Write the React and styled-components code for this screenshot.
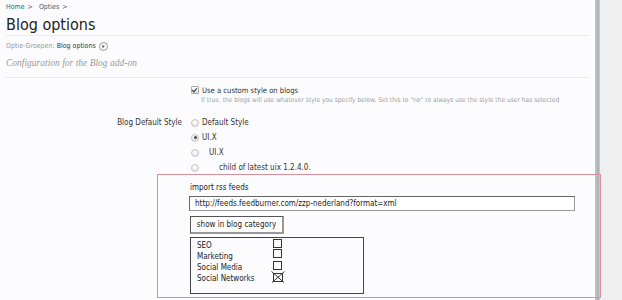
import React from 'react'
import styled, { createGlobalStyle } from 'styled-components'

const GlobalStyle = createGlobalStyle`
  html, body {
    margin: 0;
    padding: 0;
    background: #efefef;
  }
  body {
    font-family: "DejaVu Sans Condensed", "DejaVu Sans", sans-serif;
    color: #333;
  }
`

const Page = styled.div`
  display: flex;
  width: 622px;
  height: 300px;
  overflow: hidden;
`

const Panel = styled.div`
  width: 595px;
  flex-shrink: 0;
  background: #fcfcfe;
  padding: 3px 0 0 6px;
  box-sizing: border-box;
`

const Edge = styled.div`
  width: 5px;
  flex-shrink: 0;
  background: linear-gradient(to right, #c4cad0, #a8b1ba 60%, #c9ced3);
`

const Breadcrumb = styled.div`
  font-size: 7px;
  line-height: 9px;
  color: #3d5e7a;
  word-spacing: 1px;
`

const Crumb = styled.span`
  margin-right: 6px;
`

const Title = styled.h1`
  margin: 2px 0 0;
  font-family: "DejaVu Sans Condensed", "DejaVu Sans", sans-serif;
  font-weight: normal;
  font-size: 16px;
  line-height: 21px;
  color: #222;
`

const Divider = styled.div`
  height: 1px;
  width: 583px;
  background: #e4ecf0;
  margin-top: ${({ top }) => top}px;
`

const GroupLine = styled.div`
  margin-top: 6px;
  display: flex;
  align-items: center;
  gap: 2px;
  font-size: 7px;
  line-height: 9px;
  color: #999;
`

const GroupName = styled.span`
  color: #333;
`

const ToggleIcon = styled.span`
  display: inline-flex;
  align-items: center;
  justify-content: center;
  width: 7px;
  height: 7px;
  border: 1px solid #999;
  border-radius: 50%;
  font-size: 4px;
  color: #666;
  margin-left: 1px;
`

const Description = styled.div`
  margin-top: 7px;
  font-family: "Liberation Serif", "DejaVu Serif", serif;
  font-style: italic;
  font-size: 9.5px;
  line-height: 11px;
  color: #9a9a9a;
`

const Form = styled.div`
  margin-top: 3px;
  display: grid;
  grid-template-columns: 176px 1fr;
  column-gap: 9px;
  align-items: start;
`

const Label = styled.div`
  text-align: right;
  font-size: 8px;
  line-height: 11px;
  color: #333;
`

const Controls = styled.div`
  display: flex;
  flex-direction: column;
`

const OptionRow = styled.label`
  display: flex;
  align-items: center;
  height: ${({ h }) => h || 15}px;
  font-size: ${({ fs }) => fs || 8}px;
  color: #333;
`

const OptionText = styled.span`
  margin-left: ${({ indent }) => 3 + (indent || 0)}px;
`

const Hint = styled.div`
  margin: -3px 0 0 10px;
  font-size: 6.6px;
  line-height: 9px;
  color: #9c9c9c;
  white-space: nowrap;
`

const Check = styled.span`
  position: relative;
  width: 6px;
  height: 6px;
  border: 1px solid #aaa;
  border-radius: 1px;
  background: linear-gradient(#fafafa, #dcdcdc);
  &::after {
    content: '';
    position: absolute;
    left: 1px;
    top: 0px;
    width: 2px;
    height: 4px;
    border: solid #333;
    border-width: 0 1.5px 1.5px 0;
    transform: rotate(40deg);
  }
`

const Radio = styled.span`
  position: relative;
  width: 6px;
  height: 6px;
  border: 1px solid #c4c4c4;
  border-radius: 50%;
  background: radial-gradient(circle at 40% 35%, #ffffff, #dedede);
  &::after {
    content: '';
    display: ${({ checked }) => (checked ? 'block' : 'none')};
    position: absolute;
    left: 1.5px;
    top: 1.5px;
    width: 3px;
    height: 3px;
    border-radius: 50%;
    background: #444;
  }
`

const Highlight = styled.div`
  position: relative;
  z-index: 1;
  margin: -1px 0 0 151px;
  width: 444px;
  height: 124px;
  box-sizing: border-box;
  border: 1px solid #dc8f9a;
  padding: 8px 0 0 32px;
  font-family: "DejaVu Sans Condensed", "DejaVu Sans", sans-serif;
  font-size: 8px;
  color: #222;
`

const FieldTitle = styled.div`
  line-height: 10px;
`

const UrlInput = styled.div`
  margin: 3px 0 0 -1px;
  width: 386px;
  height: 15px;
  box-sizing: border-box;
  border: 1px solid #666;
  border-bottom-color: #999;
  border-right-color: #999;
  padding: 0 0 0 5px;
  display: flex;
  align-items: center;
  font-size: 8px;
  background: #fff;
`

const Button = styled.div`
  margin-top: 5px;
  width: 94px;
  height: 18px;
  box-sizing: border-box;
  border: 1px solid #555;
  border-right: 2px solid #999;
  border-bottom: 2px solid #999;
  display: flex;
  align-items: center;
  justify-content: center;
  font-size: 8px;
  background: #fff;
`

const CategoryBox = styled.div`
  margin-top: 3px;
  width: 174px;
  height: 57px;
  box-sizing: border-box;
  border: 1px solid #444;
  padding: 0 0 0 6px;
  display: grid;
  grid-template-columns: 76px 12px;
  align-content: start;
`

const CatName = styled.div`
  height: 11px;
  line-height: 11px;
  padding-top: ${({ pt }) => pt || 0}px;
`

const CatBox = styled.span`
  display: block;
  width: 9px;
  height: 9px;
  box-sizing: border-box;
  border: 1px solid #333;
  margin-top: ${({ mt }) => mt || 0}px;
`

const Cross = styled.svg`
  display: block;
  margin: ${({ mt }) => mt || 0}px 0 0 -2px;
`

const categories = [
  { name: 'SEO', mt: 1, pt: 2 },
  { name: 'Marketing', mt: -2 },
  { name: 'Social Media', mt: -1 },
  { name: 'Social Networks', mt: -2, crossed: true },
]

export default function App() {
  return (
    <>
      <GlobalStyle />
      <Page>
        <Panel>
          <Breadcrumb>
            <Crumb>Home &gt;</Crumb>
            <Crumb>Opties &gt;</Crumb>
          </Breadcrumb>
          <Title>Blog options</Title>
          <Divider top={0} />
          <GroupLine>
            Optie-Groepen: <GroupName>Blog options</GroupName>
            <ToggleIcon>▼</ToggleIcon>
          </GroupLine>
          <Description>Configuration for the Blog add-on</Description>
          <Divider top={8} />
          <Form>
            <div />
            <Controls>
              <OptionRow h={18} fs={7.6}>
                <Check />
                <OptionText>Use a custom style on blogs</OptionText>
              </OptionRow>
              <Hint>
                If true, the blogs will use whatever style you specify below. Set this to "no" to always use the style the user has selected
              </Hint>
            </Controls>
            <Label style={{ marginTop: 12 }}>Blog Default Style</Label>
            <Controls style={{ marginTop: 10 }}>
              <OptionRow>
                <Radio />
                <OptionText>Default Style</OptionText>
              </OptionRow>
              <OptionRow>
                <Radio checked />
                <OptionText>UI.X</OptionText>
              </OptionRow>
              <OptionRow>
                <Radio />
                <OptionText indent={7}>UI.X</OptionText>
              </OptionRow>
              <OptionRow>
                <Radio />
                <OptionText indent={17}>child of latest uix 1.2.4.0.</OptionText>
              </OptionRow>
            </Controls>
          </Form>
          <Highlight>
            <FieldTitle>import rss feeds</FieldTitle>
            <UrlInput>http://feeds.feedburner.com/zzp-nederland?format=xml</UrlInput>
            <Button>show in blog category</Button>
            <CategoryBox>
              {categories.map(c => (
                <React.Fragment key={c.name}>
                  <CatName pt={c.pt}>{c.name}</CatName>
                  {c.crossed ? (
                    <Cross mt={c.mt} width="14" height="12" viewBox="0 0 14 12">
                      <rect x="2.5" y="2.5" width="9" height="8" fill="none" stroke="#333" />
                      <line x1="0.5" y1="0.5" x2="13" y2="11.5" stroke="#333" />
                      <line x1="13.5" y1="0.5" x2="1" y2="11.5" stroke="#333" />
                    </Cross>
                  ) : (
                    <CatBox mt={c.mt} />
                  )}
                </React.Fragment>
              ))}
            </CategoryBox>
          </Highlight>
        </Panel>
        <Edge />
      </Page>
    </>
  )
}
